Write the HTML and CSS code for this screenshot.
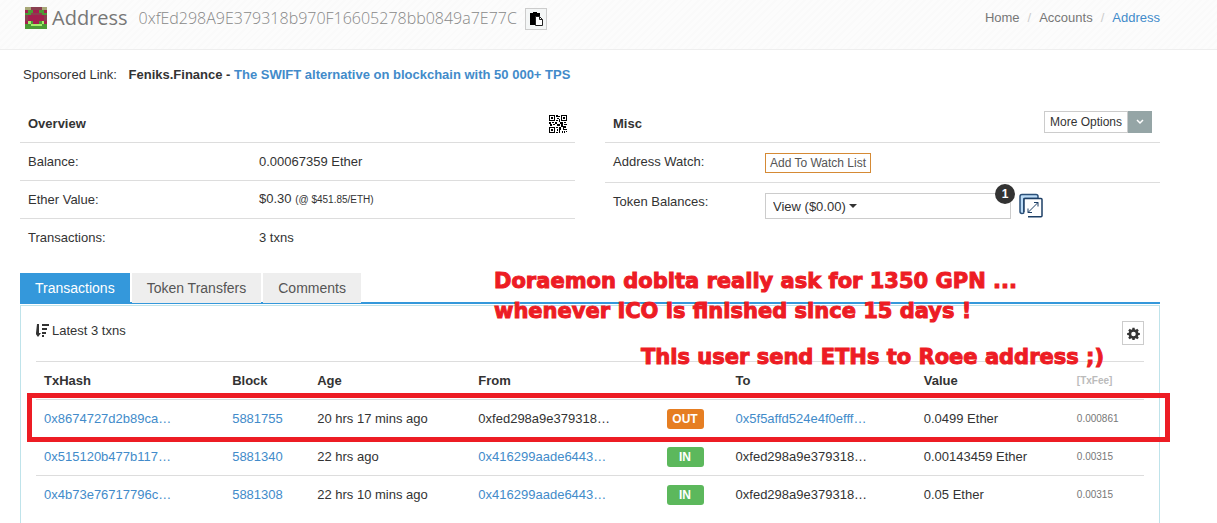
FILE: index.html
```
<!DOCTYPE html>
<html lang="en">
<head>
  <meta charset="UTF-8">
  <meta name="viewport" content="width=device-width, initial-scale=1.0">
  <title>Ethereum Address</title>
  <link rel="stylesheet" href="styles.css">
</head>
<body>
  <header class="page-header">
    <div class="container header-row">
      <h1>
        <svg class="identicon" viewBox="0 0 8 8" shape-rendering="crispEdges" aria-hidden="true">
          <path fill="#a31f4f" d="M0 0h8v8H0z"/>
          <path fill="#a8a878" d="M0 0h2v1H0zM6 0h2v1H6z"/>
          <path fill="#8a3f50" d="M2 0h4v1H2zM0 3h1v2H0zM7 3h1v2H7zM2 2h4v1H2z"/>
          <path fill="#4c9a36" d="M1 1h6v1H1zM0 2h2v1H0zM6 2h2v1H6zM0 6h1v2H0zM7 6h1v2H7zM1 5h2v3H1zM5 5h2v3H5zM3 6h2v2H3z"/>
          <path fill="#a31f4f" d="M3 1h2v1H3z"/>
          <path fill="#a5ee6a" d="M1 5h1v1H1zM6 5h1v1H6zM2 6h4v1H2z"/>
        </svg>
        Address <span class="hash">0xfEd298A9E379318b970F16605278bb0849a7E77C</span>
      </h1>
      <button class="copy-button" aria-label="Copy address">
        <svg viewBox="0 0 14 14" aria-hidden="true">
          <path d="M1 1h3V0h4v1h3v4H6v8H1z"/>
          <path fill="#fff" stroke="#222" d="M6.500 4.500h4l3 3v6h-7z"/>
          <path fill="none" stroke="#222" d="M10.500 4.500v3h3"/>
        </svg>
      </button>
      <nav class="breadcrumb">
        <a href="#">Home</a><span>/</span><a href="#">Accounts</a><span>/</span><a class="current" href="#">Address</a>
      </nav>
    </div>
  </header>

  <main class="container">
    <p class="sponsored">Sponsored Link: <b>Feniks.Finance - <a href="#">The SWIFT alternative on blockchain with 50 000+ TPS</a></b></p>

    <div class="summary">
      <section class="summary-col">
        <div class="summary-head">
          <h2>Overview</h2>
          <svg class="qr" viewBox="0 0 21 21" shape-rendering="crispEdges" role="img" aria-label="QR code">
            <path fill-rule="evenodd" d="M0 0h7v7H0zM1 1v5h5V1zM2 2h3v3H2zM14 0h7v7h-7zM15 1v5h5V1zM16 2h3v3h-3zM0 14h7v7H0zM1 15v5h5v-5zM2 16h3v3H2z"/>
            <path d="M8 0h2v2H8zM11 1h2v1h-2zM9 3h3v2H9zM12 5h1v3h-1zM8 6h2v1H8zM0 8h2v2H0zM3 8h3v1H3zM7 8h2v3H7zM10 7h1v3h-1zM13 8h3v2h-3zM18 8h2v1h-2zM1 11h3v2H1zM5 10h2v2H5zM9 11h4v2H9zM14 11h2v3h-2zM17 10h4v2h-4zM8 14h3v1H8zM12 14h2v3h-2zM16 13h1v4h-1zM18 13h2v2h-2zM9 16h2v3H9zM14 17h3v1h-3zM18 16h3v2h-3zM12 18h1v3h-1zM8 20h2v1H8zM15 19h1v2h-1zM17 19h2v2h-2zM20 19h1v1h-1z"/>
          </svg>
        </div>
        <table class="info-table">
          <tr><th scope="row">Balance:</th><td>0.00067359 Ether</td></tr>
          <tr><th scope="row">Ether Value:</th><td>$0.30 <small>(@ $451.85/ETH)</small></td></tr>
          <tr><th scope="row">Transactions:</th><td>3 txns</td></tr>
        </table>
      </section>

      <section class="summary-col">
        <div class="summary-head">
          <h2>Misc</h2>
          <div class="more-options">
            <button class="more-label">More Options</button>
            <button class="more-toggle" aria-label="Open options">
              <svg viewBox="0 0 8 6" aria-hidden="true"><path fill="none" stroke="#fff" stroke-width="1.500" d="M1 1l3 3 3-3"/></svg>
            </button>
          </div>
        </div>
        <div class="misc-row">
          <span class="misc-label">Address Watch:</span>
          <button class="watch-button">Add To Watch List</button>
        </div>
        <div class="misc-row">
          <label class="misc-label" for="tokens">Token Balances:</label>
          <div class="token-box">
            <select id="tokens"><option>View ($0.00)</option></select>
            <span class="token-count">1</span>
          </div>
          <a class="expand" href="#" aria-label="View expanded token holdings">
            <svg viewBox="0 0 24 24" aria-hidden="true">
              <path fill="#bcdcf7" stroke="#2b5079" stroke-width="1.500" stroke-linejoin="round" d="M1 3q0-2 2-2h14q2 0 2 2v2H5v14q0 1-2 1t-2-2z"/>
              <path fill="#fff" stroke="#1d3f66" stroke-width="1.500" d="M9 23.200h13q1 0 1-1V6q0-1-1-1H6q-1 0-1 1v13"/>
              <path fill="none" stroke="#1d3f66" d="M9 19L19 9M15 9h4v4M9 15v4h4"/>
            </svg>
          </a>
        </div>
      </section>
    </div>

    <div class="tabs">
      <button class="tab active">Transactions</button>
      <button class="tab">Token Transfers</button>
      <button class="tab">Comments</button>
    </div>

    <section class="panel">
      <div class="panel-head">
        <svg class="sort-icon" viewBox="0 0 13 13" aria-hidden="true">
          <path fill="#333" d="M1 0h2v9h2l-3 4-3-4h1zM6 0h7v2H6zM6 4h5v2H6zM6 8h4v2H6zM6 11h2v2H6z"/>
        </svg>
        <span>Latest 3 txns</span>
        <button class="settings" aria-label="Settings">
          <svg viewBox="0 0 16 16" aria-hidden="true">
            <path fill="#333" fill-rule="evenodd" d="M6.700 1h2.600l.4 2 1.200.5 1.700-1.200 1.900 1.900-1.200 1.700.5 1.200 2 .4v2.300l-2 .4-.5 1.200 1.200 1.700-1.900 1.900-1.700-1.200-1.200.5-.4 2H6.700l-.4-2-1.200-.5-1.700 1.200-1.900-1.900 1.200-1.700-.5-1.200-2-.4V7.500l2-.4.5-1.200-1.200-1.700 1.900-1.900 1.700 1.200 1.200-.5zM8 5.700a2.800 2.800 0 1 0 0 5.600 2.800 2.800 0 0 0 0-5.600z"/>
          </svg>
        </button>
      </div>

      <table class="tx-table">
        <colgroup>
          <col class="col-hash"><col class="col-block"><col class="col-age"><col class="col-hash">
          <col class="col-dir"><col class="col-hash"><col class="col-value"><col class="col-fee">
        </colgroup>
        <thead>
          <tr><th>TxHash</th><th>Block</th><th>Age</th><th>From</th><th></th><th>To</th><th>Value</th><th class="fee">[TxFee]</th></tr>
        </thead>
        <tbody>
          <tr>
            <td><a href="#">0x8674727d2b89ca…</a></td>
            <td><a href="#">5881755</a></td>
            <td>20 hrs 17 mins ago</td>
            <td>0xfed298a9e379318…</td>
            <td><span class="label out">OUT</span></td>
            <td><a href="#">0x5f5affd524e4f0efff…</a></td>
            <td>0.0499 Ether</td>
            <td class="fee">0.000861</td>
          </tr>
          <tr>
            <td><a href="#">0x515120b477b117…</a></td>
            <td><a href="#">5881340</a></td>
            <td>22 hrs ago</td>
            <td><a href="#">0x416299aade6443…</a></td>
            <td><span class="label in">IN</span></td>
            <td>0xfed298a9e379318…</td>
            <td>0.00143459 Ether</td>
            <td class="fee">0.00315</td>
          </tr>
          <tr>
            <td><a href="#">0x4b73e76717796c…</a></td>
            <td><a href="#">5881308</a></td>
            <td>22 hrs 10 mins ago</td>
            <td><a href="#">0x416299aade6443…</a></td>
            <td><span class="label in">IN</span></td>
            <td>0xfed298a9e379318…</td>
            <td>0.05 Ether</td>
            <td class="fee">0.00315</td>
          </tr>
        </tbody>
      </table>

      <p class="note note-ask">Doraemon dobita really ask for 1350 GPN ...<br>whenever ICO is finished since 15 days !</p>
      <p class="note note-send">This user send ETHs to Roee address ;)</p>
      <div class="highlight"></div>
    </section>
  </main>
</body>
</html>
```
FILE: styles.css
```
* {
  margin: 0;
  padding: 0;
  box-sizing: border-box;
}

body {
  min-height: 100vh;
  display: flex;
  flex-direction: column;
  background: #fff;
  color: #333;
  font-family: "Liberation Sans", Arial, sans-serif;
  font-size: 13px;
  line-height: 20px;
  overflow-x: hidden;
}

a {
  color: #428bca;
  text-decoration: none;
}

button,
select {
  font-family: inherit;
  color: #333;
  background: #fff;
  border: 1px solid #ccc;
  cursor: pointer;
}

svg {
  display: block;
}

.container {
  margin: 0 57px 0 20px;
}

/* Header */
.page-header {
  height: 50px;
  border-bottom: 1px solid #eee;
  background: repeating-linear-gradient(135deg, #fcfcfc 0 3px, #fafafa 3px 5px);
}

.header-row {
  display: flex;
  align-items: center;
  height: 36px;
}

h1 {
  display: flex;
  align-items: center;
  gap: 5px;
  padding-left: 5px;
  color: #777;
  font-family: "Open Sans", sans-serif;
  font-size: 20px;
  font-weight: 400;
}

.identicon {
  width: 22px;
  height: 22px;
}

.hash {
  margin-left: 6px;
  color: #888;
  font-size: 16px;
  font-weight: 300;
}

.copy-button {
  display: grid;
  place-items: center;
  width: 22px;
  height: 22px;
  margin: 2px 0 0 8px;
  background: #f4f6f6;
}

.copy-button svg {
  width: 14px;
  height: 14px;
}

.breadcrumb {
  margin-left: auto;
}

.breadcrumb a {
  color: #777;
}

.breadcrumb .current {
  color: #428bca;
}

.breadcrumb span {
  margin: 0 8px;
  color: #ccc;
}

main {
  flex: 1;
  display: flex;
  flex-direction: column;
}

.sponsored {
  padding: 15px 3px 20px;
}

.sponsored b {
  margin-left: 8px;
}

/* Overview and misc */
.summary {
  display: flex;
  gap: 30px;
  height: 168px;
}

.summary-col {
  flex: 1;
}

.summary-head {
  display: flex;
  align-items: center;
  justify-content: space-between;
  height: 38px;
  padding: 0 8px;
  border-bottom: 1px solid #ddd;
}

h2 {
  font-size: 13px;
}

.qr {
  width: 18px;
  height: 18px;
}

.info-table {
  width: 100%;
  border-spacing: 0;
}

.info-table th,
.info-table td {
  height: 38px;
  padding: 0 8px;
  border-bottom: 1px solid #ddd;
  font-weight: 400;
  text-align: left;
}

.info-table tr:last-child > * {
  border-bottom: 0;
}

.info-table th {
  width: 231px;
}

small {
  font-size: 10px;
}

.more-options {
  display: flex;
  margin-bottom: 4px;
}

.more-options button {
  height: 22px;
}

.more-label {
  padding: 0 5px;
  font-size: 12px;
}

.more-toggle {
  display: grid;
  place-items: center;
  width: 24px;
  background: #95a5a6;
  border-color: #95a5a6;
}

.more-toggle svg {
  width: 8px;
  height: 6px;
}

.misc-row {
  display: flex;
  align-items: flex-start;
  height: 40px;
  padding: 9px 8px;
  border-bottom: 1px solid #ddd;
}

.misc-row:last-child {
  border-bottom: 0;
}

.misc-label {
  width: 152px;
}

.watch-button,
.token-box,
.expand {
  margin-top: 1px;
}

.watch-button {
  height: 20px;
  padding: 0 4px;
  border-color: #d58a35;
  color: #555;
  font-size: 12px;
}

.token-box {
  position: relative;
  width: 246px;
}

.token-box select {
  display: block;
  width: 100%;
  height: 26px;
  padding: 0 7px;
  appearance: none;
  background: #fff url("data:image/svg+xml,%3Csvg xmlns='http://www.w3.org/2000/svg' viewBox='0 0 8 4'%3E%3Cpath fill='%23333' d='M0 0h8L4 4z'/%3E%3C/svg%3E") no-repeat 83px 10px / 8px 4px;
  font-size: 13px;
}

.token-count {
  position: absolute;
  top: -9px;
  right: -4px;
  width: 20px;
  height: 20px;
  border-radius: 50%;
  background: #333;
  color: #fff;
  font-size: 12px;
  font-weight: 700;
  text-align: center;
}

.expand {
  margin-left: 8px;
}

.expand svg {
  width: 24px;
  height: 25px;
}

/* Tabs */
.tabs {
  display: flex;
  gap: 2px;
  margin-bottom: 1px;
  background: linear-gradient(#3498db, #3498db) bottom / 100% 2px no-repeat;
}

.tab {
  height: 30px;
  padding: 0 15px;
  border: 0;
  background: #eee;
  color: #555;
  font-size: 14px;
}

.tab.active {
  height: 31px;
  padding-bottom: 1px;
  background: #3498db;
  color: #fff;
}

.panel {
  position: relative;
  flex: 1;
  padding: 15px;
  border: 1px solid #bfe3ea;
  border-bottom: 0;
}

.panel-head {
  display: flex;
  align-items: flex-start;
  gap: 3px;
  height: 40px;
}

.sort-icon {
  width: 13px;
  height: 13px;
  margin-top: 3px;
}

.settings {
  display: grid;
  place-items: center;
  width: 22px;
  height: 24px;
  margin-left: auto;
}

.settings svg {
  width: 13px;
  height: 13px;
}

.tx-table {
  width: 100%;
  table-layout: fixed;
  border-collapse: collapse;
}

.tx-table th,
.tx-table td {
  height: 38px;
  padding: 0 8px;
  border-top: 1px solid #ddd;
  text-align: left;
  white-space: nowrap;
}

.col-hash { width: 188px; }
.col-block { width: 85px; }
.col-age { width: 161px; }
.col-dir { width: 69px; }
.col-value { width: 153px; }
.col-fee { width: 75px; }

.tx-table .fee {
  color: #777;
  font-size: 10px;
}

.tx-table th.fee {
  color: #bbb;
}

.label {
  display: block;
  width: 37px;
  border-radius: 3px;
  color: #fff;
  font-size: 12px;
  font-weight: 700;
  text-align: center;
}

.out {
  background: #e67e22;
}

.in {
  background: #5cb85c;
}

/* Red notes drawn over the page */
.note {
  position: absolute;
  color: #ed1c24;
  font-family: "DejaVu Sans", sans-serif;
  font-size: 21px;
  font-weight: 700;
  line-height: 30px;
  white-space: nowrap;
  -webkit-text-stroke: 1px #ed1c24;
}

.note-ask {
  top: -40px;
  left: 473px;
}

.note-send {
  top: 36px;
  left: 620px;
}

.highlight {
  position: absolute;
  top: 87px;
  left: 6px;
  right: -11px;
  height: 49px;
  border: 5px solid #ed1c24;
}
```
